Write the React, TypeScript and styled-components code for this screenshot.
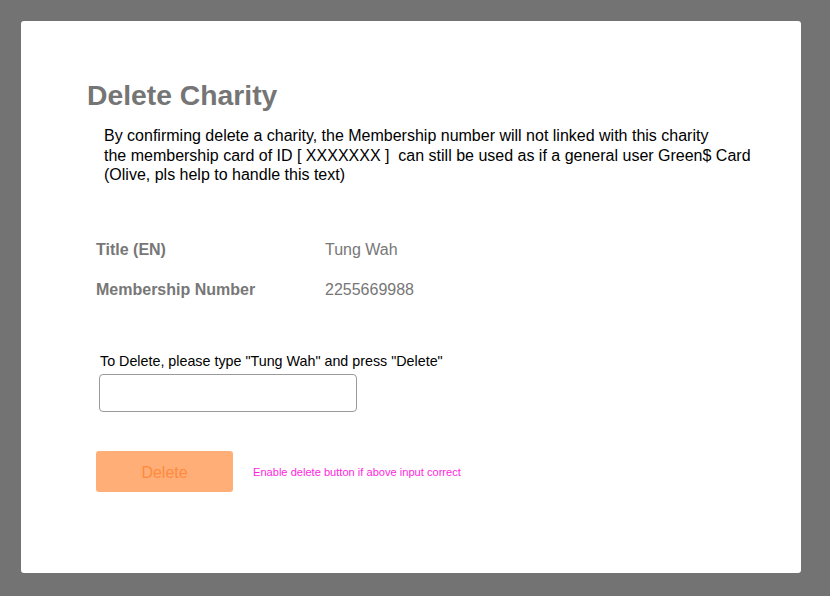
import styled, { createGlobalStyle } from "styled-components";

const GlobalStyle = createGlobalStyle`
  html, body {
    margin: 0;
    padding: 0;
    background: #737373;
    font-family: "Liberation Sans", Arial, sans-serif;
  }
`;

const Page = styled.main`
  width: 830px;
  height: 596px;
  box-sizing: border-box;
  padding: 21px 29px 23px 21px;
`;

const Card = styled.section`
  height: 100%;
  box-sizing: border-box;
  background: #ffffff;
  border-radius: 3px;
  padding: 58px 40px 0 66px;
  display: flex;
  flex-direction: column;
`;

const Title = styled.h1`
  margin: 0;
  font-size: 28.3px;
  line-height: 32px;
  font-weight: 700;
  color: #757575;
`;

const Notice = styled.p`
  margin: 15px 0 0 17px;
  font-size: 16px;
  line-height: 19.5px;
  color: #000;
`;

const InfoList = styled.dl`
  margin: 55px 0 0 9px;
  display: grid;
  grid-template-columns: 229px 1fr;
  row-gap: 20px;
  font-size: 16px;
  line-height: 20px;
`;

const Label = styled.dt`
  font-weight: 700;
  color: #777;
`;

const Value = styled.dd`
  margin: 0;
  color: #777;
`;

const ConfirmBlock = styled.div`
  margin: 53px 0 0 12px;
  display: flex;
  flex-direction: column;
  gap: 5px;
`;

const ConfirmLabel = styled.label`
  font-size: 14.3px;
  line-height: 16px;
  color: #000;
  margin-left: 1px;
`;

const TextInput = styled.input`
  width: 258px;
  height: 38px;
  box-sizing: border-box;
  border: 1px solid #9a9a9a;
  border-radius: 4px;
  background: #fff;
  font: inherit;
  padding: 0 8px;
  outline: none;
`;

const ActionRow = styled.div`
  margin: 39px 0 0 9px;
  display: flex;
  align-items: center;
  gap: 20px;
`;

const DeleteButton = styled.button`
  width: 137px;
  height: 41px;
  border: 0;
  border-radius: 3px;
  background: #ffae78;
  color: #ff8a3d;
  font-family: inherit;
  font-size: 16px;
  cursor: default;
  padding: 4px 0 0;
`;

const DevNote = styled.span`
  font-size: 11.1px;
  color: #ff1fe0;
  padding-top: 2px;
`;

export default function App() {
  return (
    <>
      <GlobalStyle />
      <Page>
        <Card>
          <Title>Delete Charity</Title>
          <Notice>
            By confirming delete a charity, the Membership number will not linked with this charity
            <br />
            the membership card of ID [ XXXXXXX ]&nbsp; can still be used as if a general user Green$ Card
            <br />
            (Olive, pls help to handle this text)
          </Notice>
          <InfoList>
            <Label>Title (EN)</Label>
            <Value>Tung Wah</Value>
            <Label>Membership Number</Label>
            <Value>2255669988</Value>
          </InfoList>
          <ConfirmBlock>
            <ConfirmLabel htmlFor="confirm">To Delete, please type "Tung Wah" and press "Delete"</ConfirmLabel>
            <TextInput id="confirm" type="text" />
          </ConfirmBlock>
          <ActionRow>
            <DeleteButton type="button" disabled>Delete</DeleteButton>
            <DevNote>Enable delete button if above input correct</DevNote>
          </ActionRow>
        </Card>
      </Page>
    </>
  );
}
